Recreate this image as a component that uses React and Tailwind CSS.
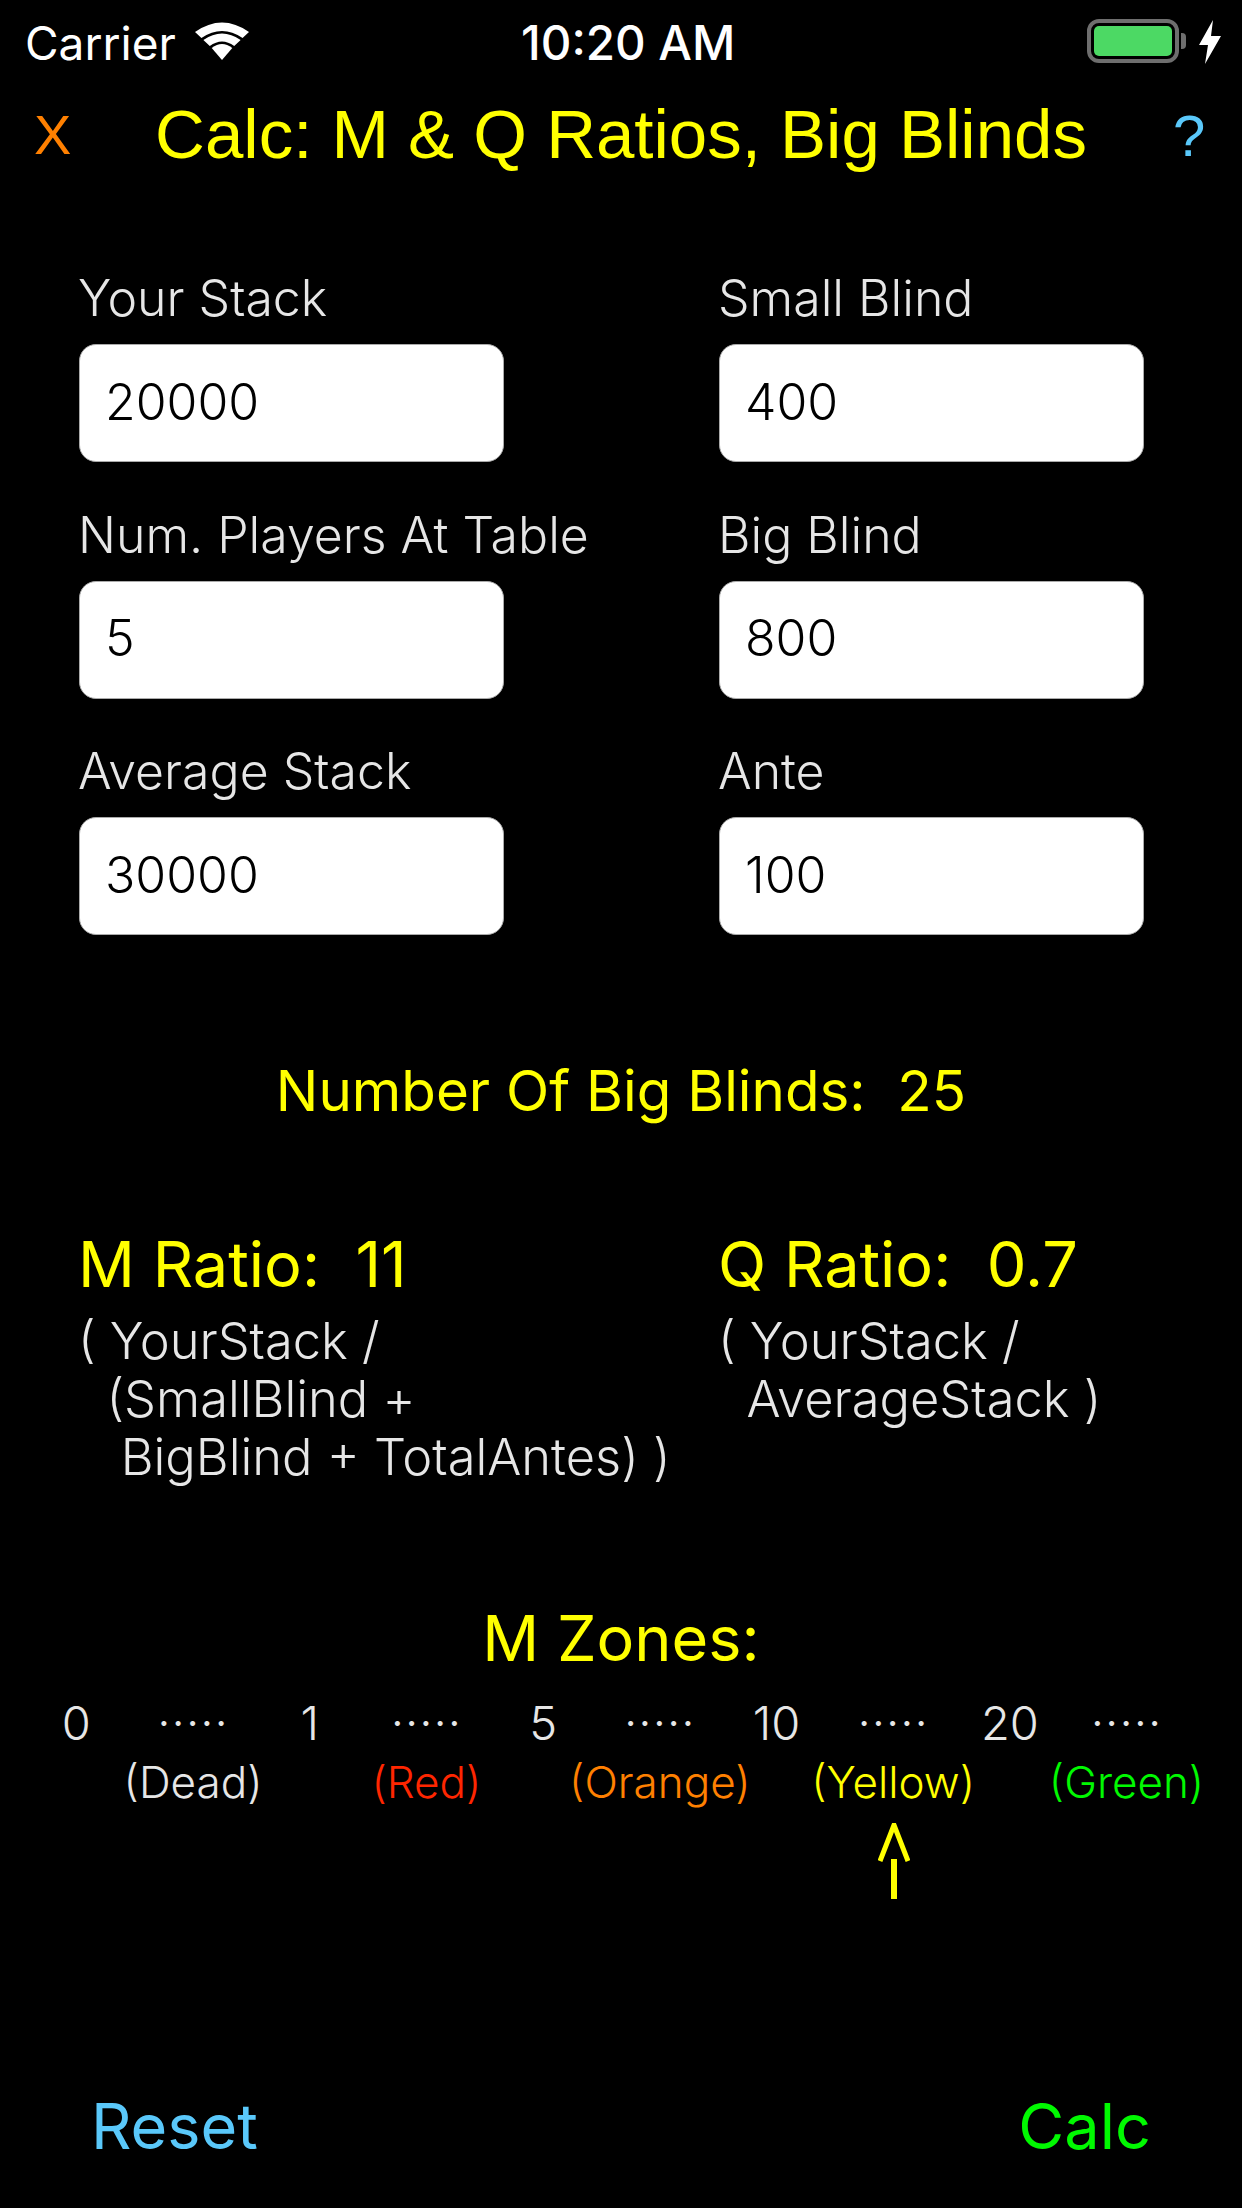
const fields = [
  ['Your Stack', '20000'],
  ['Small Blind', '400'],
  ['Num. Players At Table', '5'],
  ['Big Blind', '800'],
  ['Average Stack', '30000'],
  ['Ante', '100'],
];

const zones = [
  ['0', '(Dead)', 'text-[#e6e6e6]'],
  ['1', '(Red)', 'text-[#ff2600]'],
  ['5', '(Orange)', 'text-[#ff8000]'],
  ['10', '(Yellow)', 'text-[#ffff00]'],
  ['20', '(Green)', 'text-[#00f900]'],
];

const StatusBar = () => (
  <div className="relative h-[88px] text-white">
    <span className="absolute left-[25px] top-[19px] text-[46px] leading-[48px] font-['Inter',sans-serif]">Carrier</span>
    <svg className="absolute left-[195px] top-[21px]" width="54" height="40" viewBox="0 0 42 40" preserveAspectRatio="none" fill="none">
      <path d="M0 11 Q21 -8 42 11 L37 17 Q21 3 5 17 Z" fill="white" />
      <path d="M6.500 19 Q21 6 35.500 19 L30.500 25 Q21 16 11.500 25 Z" fill="white" />
      <path d="M13 27 Q21 19 29 27 L21 39 Z" fill="white" />
    </svg>
    <span className="absolute left-[521px] top-[19px] text-[47.5px] leading-[48px] font-medium font-['Inter',sans-serif]">10:20 AM</span>
    <div className="absolute left-[1087px] top-[19px] flex items-center">
      <div className="w-[92px] h-[44px] rounded-[12px] border-[4px] border-[#6e6e6e] p-[3px]">
        <div className="w-full h-full rounded-[5px] bg-[#4cd964]" />
      </div>
      <div className="w-[5px] h-[16px] rounded-r-[4px] bg-[#6e6e6e] ml-[2px]" />
    </div>
    <svg className="absolute left-[1198px] top-[20px]" width="24" height="44" viewBox="0 0 24 44">
      <path d="M15 0 L1 25 H10 L7 44 L23 16 H13 Z" fill="white" />
    </svg>
  </div>
);

const Field = ({ label, value }) => (
  <div className="h-[236.5px]">
    <div className="h-[62px] -ml-[1px] text-[50px] leading-[62px] text-[#e6e6e6] whitespace-nowrap font-[350] font-['Inter',sans-serif]">{label}</div>
    <div className="w-[425px] h-[118px] mt-[15px] px-[25px] pb-[2px] flex items-center rounded-[17px] bg-white border border-[#aaaaaa] text-black text-[50px] font-[350] font-['Inter',sans-serif]">
      {value}
    </div>
  </div>
);

const Zones = () => (
  <div className="grid grid-cols-[repeat(10,116.7px)] ml-[18px] mt-[17px] text-[47px] font-[350] font-['Inter',sans-serif]">
    {zones.map(([num]) => [
      <div key={num} className="h-[64px] flex justify-center items-center text-[#e6e6e6]">{num}</div>,
      <div key={num + 'd'} className="h-[64px] flex justify-center items-center text-[#e6e6e6] tracking-[1px]">·····</div>,
    ])}
    {zones.map(([num, label, color]) => [
      <div key={num} />,
      <div key={num + 'l'} className={`h-[54px] flex justify-center items-center whitespace-nowrap text-[44px] ${color}`}>{label}</div>,
    ])}
  </div>
);

const App = () => {
  return (
    <div className="w-[1242px] h-[2208px] bg-black flex flex-col overflow-hidden">
      <StatusBar />

      <div className="relative h-[94px] flex items-center justify-center font-['Liberation_Sans',sans-serif]">
        <span className="absolute left-[34px] text-[56px] text-[#ff8000]">X</span>
        <span className="text-[69px] text-[#ffff00]">Calc: M &amp; Q Ratios, Big Blinds</span>
        <span className="absolute left-[1173px] text-[58px] text-[#5ac8fa]">?</span>
      </div>

      <div className="grid grid-cols-2 gap-x-[215px] w-[1065px] ml-[79px] mt-[85px]">
        {fields.map(([label, value]) => (
          <Field key={label} label={label} value={value} />
        ))}
      </div>

      <div className="mt-[72px] text-center text-[56.500px] text-[#ffff00] font-[380] font-['Inter',sans-serif]">
        Number Of Big Blinds:&nbsp; 25
      </div>

      <div className="grid grid-cols-2 gap-x-[215px] w-[1065px] ml-[78px] mt-[95px] font-['Inter',sans-serif]">
        <div>
          <div className="text-[63px] leading-[72px] font-[380] text-[#ffff00]">M Ratio:&nbsp; 11</div>
          <div className="mt-[12px] text-[50.600px] leading-[58px] font-[350] text-[#e6e6e6] whitespace-pre">{'( YourStack /\n  (SmallBlind +\n   BigBlind + TotalAntes) )'}</div>
        </div>
        <div>
          <div className="text-[63px] leading-[72px] font-[380] text-[#ffff00]">Q Ratio:&nbsp; 0.7</div>
          <div className="mt-[12px] text-[50.600px] leading-[58px] font-[350] text-[#e6e6e6] whitespace-pre">{'( YourStack /\n  AverageStack )'}</div>
        </div>
      </div>

      <div className="mt-[116px] text-center text-[63px] leading-[72px] text-[#ffff00] font-[380] font-['Inter',sans-serif]">M Zones:</div>
      <Zones />

      <svg className="ml-[878px] mt-[14px]" width="32" height="76" viewBox="0 0 32 76" fill="none">
        <path d="M2 38 L16 2 L30 38" stroke="#ffff00" strokeWidth="5" />
        <path d="M16 36 V76" stroke="#ffff00" strokeWidth="6" />
      </svg>

      <div className="mt-auto mb-[46px] flex justify-between pl-[91px] pr-[91px] text-[63px] leading-[72px] font-[380] font-['Inter',sans-serif]">
        <span className="text-[#5ac8fa]">Reset</span>
        <span className="text-[#00f900]">Calc</span>
      </div>
    </div>
  );
};

export default App;
